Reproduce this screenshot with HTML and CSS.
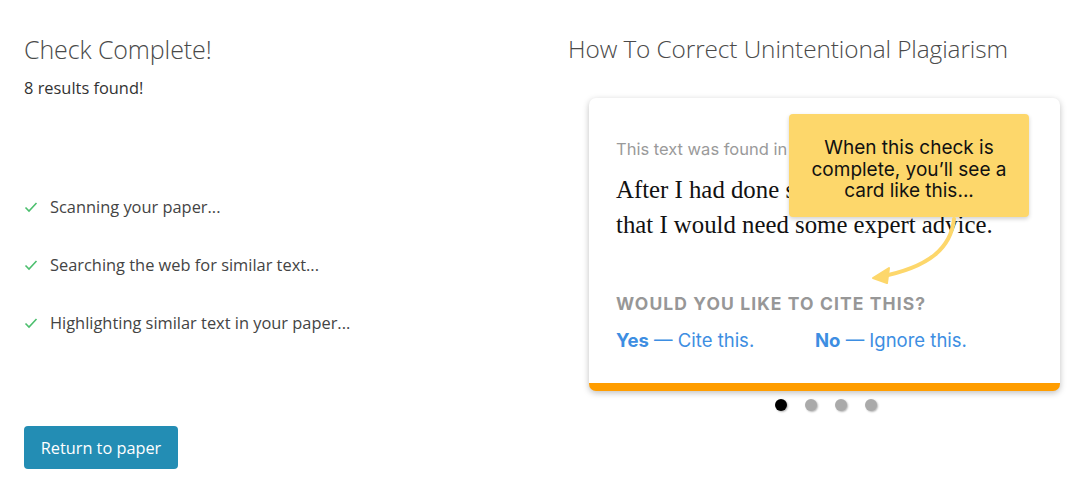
FILE: index.html
```html
<!DOCTYPE html>
<html>
<head>
<meta charset="utf-8">
<link rel="stylesheet" href="styles.css">
</head>
<body>
<div class="page">
  <section class="left">
    <h1 class="title">Check Complete!</h1>
    <p class="count">8 results found!</p>
    <ul class="steps">
      <li class="step"><svg class="check" viewBox="0 0 14 12" width="14" height="12"><path d="M1.5 6.5 L5 10 L12.5 2" fill="none" stroke="#4cbf6e" stroke-width="1.6"/></svg>Scanning your paper...</li>
      <li class="step"><svg class="check" viewBox="0 0 14 12" width="14" height="12"><path d="M1.5 6.5 L5 10 L12.5 2" fill="none" stroke="#4cbf6e" stroke-width="1.6"/></svg>Searching the web for similar text...</li>
      <li class="step"><svg class="check" viewBox="0 0 14 12" width="14" height="12"><path d="M1.5 6.5 L5 10 L12.5 2" fill="none" stroke="#4cbf6e" stroke-width="1.6"/></svg>Highlighting similar text in your paper...</li>
    </ul>
    <button class="btn">Return to paper</button>
  </section>
  <section class="right">
    <h2 class="title">How To Correct Unintentional Plagiarism</h2>
    <div class="card">
      <div class="card-body">
        <p class="found">This text was found in a source</p>
        <p class="quote">After I had done some research, I knew<br>that I would need some expert advice.</p>
        <p class="ask">WOULD YOU LIKE TO CITE THIS?</p>
        <div class="actions">
          <span class="act yes"><b>Yes</b> — Cite this.</span>
          <span class="act"><b>No</b> — Ignore this.</span>
        </div>
      </div>
      <div class="tip">When this check is complete, you’ll see a card like this...</div>
      <svg class="arrow" viewBox="0 0 100 70" width="100" height="70">
        <path d="M83 2 C80 30 60 50 8 60" fill="none" stroke="#fdd76b" stroke-width="4" stroke-linecap="round"/>
        <path d="M2 61 L18 51 L16 66 Z" fill="#fdd76b" stroke="#fdd76b" stroke-width="2" stroke-linejoin="round"/>
      </svg>
    </div>
    <div class="dots">
      <span class="dot on"></span><span class="dot"></span><span class="dot"></span><span class="dot"></span>
    </div>
  </section>
</div>
</body>
</html>
```
FILE: styles.css
```css
* { box-sizing: border-box; }
html, body { margin: 0; padding: 0; background: #fff; }
body { font-family: "Open Sans", "Segoe UI", sans-serif; color: #333; }
.page { display: flex; width: 1074px; height: 480px; }
.left { width: 568px; padding: 33px 0 0 24px; display: flex; flex-direction: column; }
.right { flex: 1; padding: 33px 0 0 0; display: flex; flex-direction: column; }
.title { margin: 0; font-weight: 300; font-size: 24.4px; line-height: 32px; color: #4a4a4a; letter-spacing: -0.1px; }
.left .title { font-size: 25px; }
.count { margin: 12px 0 0; font-size: 16.4px; line-height: 22px; color: #333; }
.steps { list-style: none; margin: 97px 0 0; padding: 0; display: flex; flex-direction: column; gap: 36px; }
.step { display: flex; align-items: center; font-size: 16.4px; line-height: 22px; color: #444; }
.check { margin-right: 12px; flex: none; }
.btn { margin-top: 92px; align-self: flex-start; width: 154px; height: 43px; border: none; border-radius: 4px; background: #238db4; color: #fff; font-family: "Open Sans", sans-serif; font-size: 16.3px; padding: 0; }
.card { position: relative; margin: 33px 0 0 21px; width: 471px; height: 293px; background: #fff; border-radius: 7px; border-bottom: 8px solid #ff9d00; box-shadow: 0 2px 6px rgba(0,0,0,0.25); font-family: Inter, "Liberation Sans", Arial, sans-serif; }
.card-body { padding: 41px 28px 0 27px; }
.found { margin: 0; font-size: 16.5px; color: #9a9a9a; line-height: 20px; white-space: nowrap; }
.quote { margin: 13px 0 0; font-family: "Liberation Serif", serif; font-size: 24.8px; line-height: 35px; color: #111; }
.ask { margin: 51px 0 0; font-size: 17.5px; font-weight: 700; color: #979797; letter-spacing: 1.1px; line-height: 22px; }
.actions { margin-top: 13px; display: flex; font-size: 18.5px; color: #3d8ee2; line-height: 24px; }
.act b { font-weight: 700; }
.yes { width: 199px; flex: none; }
.tip { position: absolute; left: 200px; top: 16px; width: 240px; height: 103px; background: #fdd76b; border-radius: 4px; box-shadow: 0 2px 4px rgba(0,0,0,0.18); padding: 23px 12px 0; text-align: center; font-size: 19px; line-height: 21.5px; color: #111; }
.arrow { position: absolute; left: 282px; top: 119px; }
.dots { display: flex; gap: 18px; margin: 8px 0 0 207px; }
.dot { width: 12px; height: 12px; border-radius: 50%; background: #aaa; box-shadow: 1px 1px 2px rgba(0,0,0,0.3); }
.dot.on { background: #000; }
```
